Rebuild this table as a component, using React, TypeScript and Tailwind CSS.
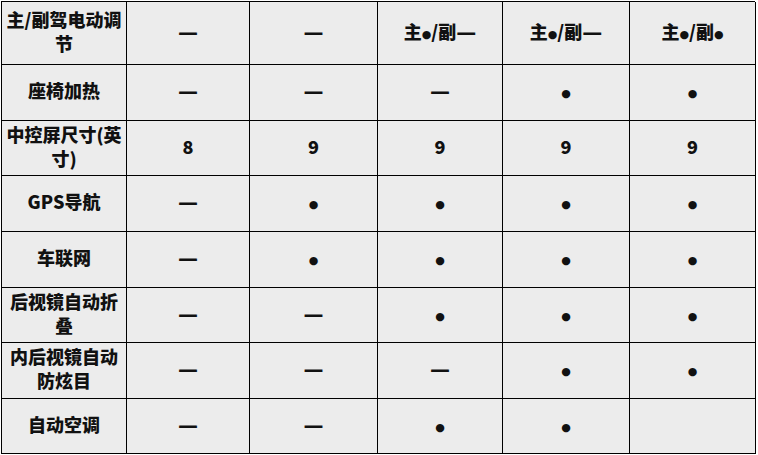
import React from "react";

const Dot = () => (
  <span className="font-['DejaVu_Sans',sans-serif] text-[11px] leading-none align-[1px]">●</span>
);

const Dash = () => (
  <span className="font-['DejaVu_Sans',sans-serif] font-bold text-[20px] leading-none">—</span>
);

type Cell = string;

const rows: Cell[][] = [
  ["主/副驾电动调|节", "—", "—", "主●/副—", "主●/副—", "主●/副●"],
  ["座椅加热", "—", "—", "—", "●", "●"],
  ["中控屏尺寸(英|寸)", "8", "9", "9", "9", "9"],
  ["GPS导航", "—", "●", "●", "●", "●"],
  ["车联网", "—", "●", "●", "●", "●"],
  ["后视镜自动折|叠", "—", "—", "●", "●", "●"],
  ["内后视镜自动|防炫目", "—", "—", "—", "●", "●"],
  ["自动空调", "—", "—", "●", "●", ""],
];

function renderText(t: string) {
  const lines = t.split("|");
  return lines.map((line, li) => (
    <div key={li}>
      {line.split("●").map((part, pi) => (
        <React.Fragment key={pi}>
          {pi > 0 && <Dot />}
          {part.split("—").map((p, di) => (
            <React.Fragment key={di}>
              {di > 0 && <Dash />}
              {p}
            </React.Fragment>
          ))}
        </React.Fragment>
      ))}
    </div>
  ));
}

export default function App() {
  return (
    <div className="w-[758px] h-[455px] bg-white pt-[1px] pl-[1px] font-['Noto_Sans_CJK_SC',sans-serif] font-black text-[18px] text-[#111]">
      <div className="grid grid-cols-[125px_123px_128px_125px_127px_126px] grid-rows-[63px_56px_55px_56px_56px_55px_56px_55px] w-[754px] border-t border-l border-black bg-[#ececec]">
        {rows.map((row, ri) =>
          row.map((cell, ci) => (
            <div
              key={`${ri}-${ci}`}
              className="border-r border-b border-black flex items-center justify-center text-center leading-[24px] pb-[5px]"
            >
              <div>{renderText(cell)}</div>
            </div>
          ))
        )}
      </div>
    </div>
  );
}
